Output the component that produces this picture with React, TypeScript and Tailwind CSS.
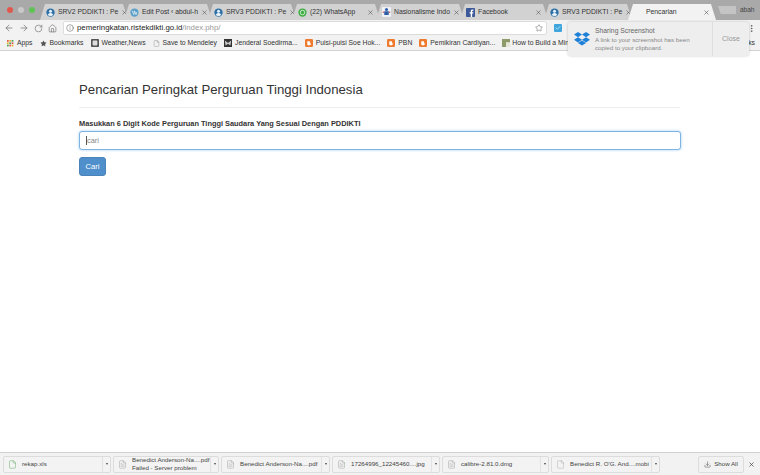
import React from "react";
import { ArrowLeft, ArrowRight, RotateCw, Home, Info, Star, Download, X, FileText, File, Check, MoreVertical } from "lucide-react";

const Globe = () => (
  <svg width="9" height="9" viewBox="0 0 12 12" className="shrink-0">
    <circle cx="6" cy="6" r="5.5" fill="#2a6fa8" />
    <circle cx="6" cy="4.4" r="2" fill="#e8f1f8" />
    <path d="M2.4 9.4c.8-2 2.2-2.6 3.6-2.6s2.8.6 3.6 2.6c-1 1-2.2 1.5-3.6 1.5S3.4 10.4 2.4 9.4z" fill="#e8f1f8" />
  </svg>
);
const Wp = () => (
  <svg width="9" height="9" viewBox="0 0 12 12" className="shrink-0">
    <circle cx="6" cy="6" r="5.5" fill="#5b9fc9" />
    <path d="M3 3.8l2 5 1-2.8-.7-2.2M6 3.8l2 5 1.3-3.6" stroke="#fff" strokeWidth="0.9" fill="none" />
  </svg>
);
const Wa = () => (
  <svg width="9" height="9" viewBox="0 0 12 12" className="shrink-0">
    <circle cx="6" cy="6" r="5.5" fill="#3fae45" />
    <circle cx="6" cy="6" r="3" fill="none" stroke="#e6f5e6" strokeWidth="1.1" />
  </svg>
);
const Nas = () => (
  <svg width="9" height="10" viewBox="0 0 12 13" className="shrink-0">
    <rect width="12" height="13" fill="#eef1f6" />
    <circle cx="6" cy="3" r="2" fill="#2f5ea8" />
    <rect x="3" y="5.5" width="6" height="5" fill="#2f5ea8" />
    <rect x="1" y="6" width="2" height="1.5" fill="#c04040" />
    <rect x="9" y="6" width="2" height="1.5" fill="#c04040" />
  </svg>
);
const Fb = () => (
  <svg width="9" height="9" viewBox="0 0 12 12" className="shrink-0">
    <rect width="12" height="12" rx="1" fill="#3b5998" />
    <path d="M8.2 12V7.4h1.4l.2-1.8H8.2V4.5c0-.5.2-.9.9-.9h.8V2c-.3 0-.8-.1-1.3-.1-1.4 0-2.3.8-2.3 2.3v1.4H4.8v1.8h1.5V12z" fill="#fff" />
  </svg>
);

const tabs = [
  { icon: <Globe />, title: "SRV2 PDDIKTI : Pe" },
  { icon: <Wp />, title: "Edit Post ‹ abdul-h" },
  { icon: <Globe />, title: "SRV3 PDDIKTI : Pe" },
  { icon: <Wa />, title: "(22) WhatsApp" },
  { icon: <Nas />, title: "Nasionalisme Indo" },
  { icon: <Fb />, title: "Facebook" },
  { icon: <Globe />, title: "SRV3 PDDIKTI : Pe" },
];

function Tab({ icon, title, active }: { icon?: React.ReactNode; title: string; active?: boolean }) {
  return (
    <div
      className={`flex h-[16px] w-[88px] shrink-0 -mr-[4px] items-center gap-[3px] pr-[6px] [clip-path:polygon(0_100%,5px_0,calc(100%-5px)_0,100%_100%)] ${
        active ? "z-10 bg-[#f2f2f2] pl-[18px]" : "bg-[#d2d2d2] pl-[6px]"
      }`}
    >
      {icon}
      <span className="flex-1 whitespace-nowrap pt-[1px] text-[6.8px] leading-none text-[#333]">{title}</span>
      <X size={7} strokeWidth={2} className="shrink-0 text-[#555]" />
    </div>
  );
}

const Orange = () => (
  <svg width="8" height="8" viewBox="0 0 12 12" className="mr-[1px] shrink-0">
    <rect width="12" height="12" rx="2" fill="#ee7b30" />
    <path d="M4 3.5h2.6c.6 0 1 .4 1 1V5.6c0 .3.3.4.5.4s.4.2.4.4v1.6c0 .8-.6 1.4-1.4 1.4H4.8c-.8 0-1.4-.6-1.4-1.4V4.1c0-.3.3-.6.6-.6z" fill="#fff" />
  </svg>
);

function Mark({ icon, label }: { icon: React.ReactNode; label: string }) {
  return (
    <div className="flex shrink-0 items-center gap-[2px] whitespace-nowrap text-[6.8px] leading-none text-[#333]">
      {icon}
      <span>{label}</span>
    </div>
  );
}

function Dl({ name, sub, w, kind }: { name: string; sub?: string; w: string; kind: "doc" | "white" | "green" }) {
  return (
    <div className={`flex h-[17px] ${w} shrink-0 items-center rounded-[2px] border border-[#dcdcdc] bg-[#f3f3f3]`}>
      <div className="flex min-w-0 flex-1 items-center gap-[5px] pl-[4px]">
        {kind === "green" ? (
          <File size={9} strokeWidth={1.2} className="shrink-0 text-[#58a55c]" />
        ) : kind === "white" ? (
          <File size={9} strokeWidth={1} className="shrink-0 text-[#999]" />
        ) : (
          <FileText size={9} strokeWidth={1} className="shrink-0 text-[#8a8a8a]" />
        )}
        <div className="whitespace-nowrap text-[6.2px] leading-[8px] text-[#444]">
          <div>{name}</div>
          {sub && <div>{sub}</div>}
        </div>
      </div>
      <div className="flex h-full w-[8px] shrink-0 items-center justify-center border-l border-[#e2e2e2]">
        <span className="h-0 w-0 border-x-[1.5px] border-t-[2px] border-x-transparent border-t-[#444]" />
      </div>
    </div>
  );
}

export default function App() {
  return (
    <div className="relative flex h-[475px] w-[760px] flex-col overflow-hidden bg-white font-['Liberation_Sans',Arial,sans-serif]">
      {/* Tab strip */}
      <div className="flex h-[20px] shrink-0 items-end bg-[#a9a9a9] pl-[40px]">
        <div className="absolute left-[7px] top-[7px] flex gap-[5px]">
          <span className="h-[6px] w-[6px] rounded-full bg-[#e2574c]" />
          <span className="h-[6px] w-[6px] rounded-full bg-[#c9c9c9]" />
          <span className="h-[6px] w-[6px] rounded-full bg-[#5fc454]" />
        </div>
        {tabs.map((t, i) => (
          <Tab key={i} icon={t.icon} title={t.title} />
        ))}
        <Tab title="Pencarian" active />
        <div className="ml-[6px] h-[8px] w-[18px] self-center bg-[#c4c4c4] [clip-path:polygon(0_0,100%_0,100%_100%,15%_100%)]" />
        <span className="ml-[4px] self-center text-[6.5px] leading-none text-[#444]">abah</span>
      </div>

      {/* Toolbar */}
      <div className="flex h-[16px] shrink-0 items-center bg-[#f2f2f2] pl-[4px] pr-[4px]">
        <ArrowLeft size={10} strokeWidth={1.6} className="text-[#666]" />
        <ArrowRight size={10} strokeWidth={1.6} className="ml-[5px] text-[#666]" />
        <RotateCw size={9} strokeWidth={1.6} className="ml-[5px] text-[#666]" />
        <Home size={9} strokeWidth={1.6} className="ml-[5px] text-[#666]" />
        <div className="ml-[6px] flex h-[14px] w-[484px] items-center rounded-[2px] border border-[#dcdcdc] bg-white pl-[2px] pr-[3px]">
          <Info size={8} strokeWidth={1.5} className="text-[#555]" />
          <span className="ml-[3px] flex-1 whitespace-nowrap text-[7.8px] leading-none text-[#222]">
            pemeringkatan.ristekdikti.go.id<span className="text-[#999]">/index.php/</span>
          </span>
          <Star size={8} strokeWidth={1.4} className="text-[#555]" />
        </div>
        <div className="ml-[7px] flex h-[8px] w-[8px] items-center justify-center rounded-[1px] bg-[#3ea6dd]">
          <Check size={6} strokeWidth={2.5} className="text-white" />
        </div>
        <MoreVertical size={9} strokeWidth={2} className="ml-auto text-[#555]" />
      </div>

      {/* Bookmarks */}
      <div className="flex h-[15px] shrink-0 items-center gap-[7px] border-b border-[#d4d4d4] bg-[#f2f2f2] pl-[7px] pr-[5px]">
        <Mark
          label="Apps"
          icon={
            <svg width="7" height="7" viewBox="0 0 9 9" className="mr-[1px] shrink-0">
              {[0, 3, 6].flatMap((y) =>
                [0, 3, 6].map((x, i) => (
                  <rect key={`${x}${y}`} x={x} y={y} width="2.2" height="2.2" fill={["#e2574c", "#f0b32e", "#4aa356"][(i + y / 3) % 3]} />
                ))
              )}
            </svg>
          }
        />
        <Mark label="Bookmarks" icon={<Star size={7} fill="#555" strokeWidth={0} className="mr-[1px]" />} />
        <Mark
          label="Weather,News"
          icon={
            <svg width="8" height="8" viewBox="0 0 10 10" className="mr-[1px] shrink-0">
              <rect width="10" height="10" rx="1" fill="#555" />
              <rect x="2" y="2" width="6" height="6" rx="1" fill="#ddd" />
            </svg>
          }
        />
        <Mark label="Save to Mendeley" icon={<File size={7} strokeWidth={1.2} className="mr-[1px] text-[#777]" />} />
        <Mark
          label="Jenderal Soedirma..."
          icon={
            <svg width="8" height="8" viewBox="0 0 10 10" className="mr-[1px] shrink-0">
              <rect width="10" height="10" fill="#333" />
              <path d="M1 2l4 3 4-3-1 6-3-2-3 2z" fill="#ccc" />
            </svg>
          }
        />
        <Mark label="Puisi-puisi Soe Hok..." icon={<Orange />} />
        <Mark label="PBN" icon={<Orange />} />
        <Mark label="Pemikiran Cardiyan..." icon={<Orange />} />
        <Mark
          label="How to Build a Mini"
          icon={
            <svg width="8" height="8" viewBox="0 0 10 10" className="shrink-0">
              <rect width="10" height="10" fill="#8d9a6a" />
              <rect x="5" y="4" width="5" height="6" fill="#e6e6d8" />
            </svg>
          }
        />
        <span className="ml-auto whitespace-nowrap text-[6.8px] leading-none text-[#333]">ks</span>
      </div>

      {/* Page */}
      <main className="flex-1 pl-[79px] pr-[79px] pt-[30px]">
        <h1 className="text-[13.2px] font-normal leading-[18px] text-[#333]">
          Pencarian Peringkat Perguruan Tinggi Indonesia
        </h1>
        <div className="mt-[8px] h-px w-[601px] bg-[#eeeeee]" />
        <label className="mt-[11px] block text-[7.4px] font-bold leading-[10px] text-[#333]">
          Masukkan 6 Digit Kode Perguruan Tinggi Saudara Yang Sesuai Dengan PDDIKTI
        </label>
        <div className="mt-[2px] flex h-[19px] w-[602px] items-center rounded-[3px] border border-[#7db4e3] bg-white pl-[6px] shadow-[0_0_3px_rgba(102,175,233,0.6)]">
          <span className="h-[9px] w-px bg-[#555]" />
          <span className="text-[7.4px] leading-none text-[#888]">cari</span>
        </div>
        <button className="mt-[7px] flex h-[19px] w-[27px] items-center justify-center rounded-[3px] border border-[#4a84b8] bg-[#4f8fcb] text-[7.6px] leading-none text-white">
          Cari
        </button>
      </main>

      {/* Download bar */}
      <div className="flex h-[23px] shrink-0 items-center gap-[2px] border-t border-[#cfcfcf] bg-[#f2f2f2] pl-[3px]">
        <Dl name="rekap.xls" w="w-[108px]" kind="green" />
        <Dl name="Benedict Anderson-Na....pdf" sub="Failed - Server problem" w="w-[106px]" kind="doc" />
        <Dl name="Benedict Anderson-Na....pdf" w="w-[109px]" kind="doc" />
        <Dl name="17264996_12245460....jpg" w="w-[108px]" kind="doc" />
        <Dl name="calibre-2.81.0.dmg" w="w-[107px]" kind="doc" />
        <Dl name="Benedict R. O'G. And....mobi" w="w-[109px]" kind="white" />
        <div className="ml-[36px] flex h-[17px] w-[46px] shrink-0 items-center justify-center gap-[3px] rounded-[2px] border border-[#dcdcdc] text-[6.2px] leading-none text-[#444]">
          <Download size={7} strokeWidth={1.6} className="text-[#444]" />
          Show All
        </div>
        <X size={7} strokeWidth={2.4} className="ml-[2px] shrink-0 text-[#444]" />
      </div>

      {/* Notification overlay */}
      <div className="absolute left-[568px] top-[22px] flex h-[34px] w-[181px] items-stretch rounded-[3px] bg-[#eeeeee] shadow-[0_0_3px_rgba(0,0,0,0.2)]">
        <div className="flex w-[27px] shrink-0 items-center justify-center">
          <svg width="16" height="14" viewBox="0 0 16 14">
            <path d="M4 0l4 2.6L4 5.2 0 2.6zM12 0l4 2.6-4 2.6-4-2.6zM0 7.8l4-2.6 4 2.6-4 2.6zM12 5.2l4 2.6-4 2.6-4-2.6zM4 11l4-2.5 4 2.5-4 2.6z" fill="#1f80d8" />
          </svg>
        </div>
        <div className="flex-1 pt-[4px]">
          <div className="text-[6.8px] leading-[9px] text-[#666]">Sharing Screenshot</div>
          <div className="mt-[1px] text-[6.2px] leading-[8px] text-[#888]">
            A link to your screenshot has been
            <br />
            copied to your clipboard.
          </div>
        </div>
        <div className="flex w-[37px] shrink-0 items-center justify-center border-l border-[#dedede] text-[7px] text-[#999]">
          Close
        </div>
      </div>
    </div>
  );
}
